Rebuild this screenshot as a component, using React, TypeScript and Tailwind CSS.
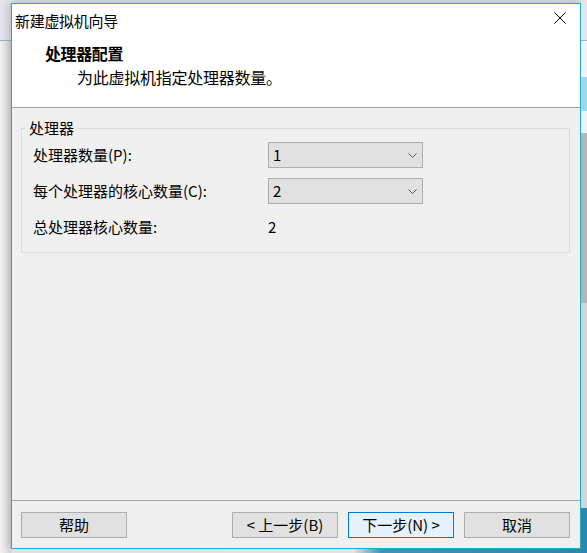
import React from "react";

const font = "font-['Noto_Sans_CJK_SC','Noto_Sans',sans-serif]";

const Chevron = () => (
  <svg width="9" height="5" viewBox="0 0 9 5" className="shrink-0">
    <polyline points="0.5,0.5 4.5,4.5 8.5,0.5" fill="none" stroke="#5a5a5a" strokeWidth="1" />
  </svg>
);

const Select = ({ value }: { value: string }) => (
  <div className="flex items-center justify-between w-[155px] h-[26px] pl-[4px] pr-[5px] bg-[#e1e1e1] border border-[#adadad]">
    <span className="text-[15px] leading-[20px]">{value}</span>
    <Chevron />
  </div>
);

const Button = ({ label, primary }: { label: string; primary?: boolean }) => (
  <button
    className={
      primary
        ? "w-[106px] h-[26px] flex items-center justify-center border border-[#0078d7] bg-[#e5f1fb] text-[15px] leading-[20px]"
        : "w-[106px] h-[26px] flex items-center justify-center border border-[#adadad] bg-[#e1e1e1] text-[15px] leading-[20px]"
    }
  >
    {label}
  </button>
);

const App = () => {
  return (
    <div className={`flex w-[587px] h-[553px] overflow-hidden text-black ${font}`}>
      {/* desktop backdrop, left */}
      <div className="flex flex-col w-[11px]">
        <div className="h-[40px] bg-[#e5e5ed]" />
        <div className="h-[1px] bg-[#9fb4c8]" />
        <div className="flex-1 bg-[linear-gradient(to_right,#f2f2f2,#dcdcdc)]" />
      </div>

      <div className="flex flex-col w-[570px]">
        <div className="h-[3px] bg-[#e5e5ed]" />
        {/* dialog window */}
        <div className="flex flex-col h-[546px] border border-[#18b0c8] bg-[#f0f0f0] shadow-[0_0_10px_rgba(0,0,0,0.3)]">
          <div className="h-[104px] bg-white border-b border-[#a0a0a0] flex flex-col">
            <div className="flex justify-between h-[34px]">
              <span className="pl-[3px] self-center text-[15px] leading-[20px] tracking-[-0.3px]">新建虚拟机向导</span>
              <svg width="12" height="12" viewBox="0 0 12 12" className="mt-[8px] mr-[14px]">
                <path d="M0.5 0.5 L11.5 11.5 M11.5 0.5 L0.5 11.5" stroke="#000" strokeWidth="1" />
              </svg>
            </div>
            <div className="pl-[33px] pt-[5px] text-[16px] leading-[20px] font-bold tracking-[-0.4px]">处理器配置</div>
            <div className="pl-[65px] mt-[4px] text-[16px] leading-[20px] tracking-[-0.25px]">为此虚拟机指定处理器数量。</div>
          </div>

          <div className="flex-1 pl-[9px] pr-[10px]">
            <fieldset className="mt-[10px] border border-[#dcdcdc] pl-[11px] pb-[12px]">
              <legend className="ml-[-8px] px-[4px] text-[15px] leading-[20px]">处理器</legend>
              <div className="flex flex-col gap-[10px] pt-[4px]">
                <div className="flex items-center h-[26px]">
                  <span className="w-[235px] text-[15px] leading-[20px]">处理器数量(P):</span>
                  <Select value="1" />
                </div>
                <div className="flex items-center h-[26px]">
                  <span className="w-[235px] text-[15px] leading-[20px]">每个处理器的核心数量(C):</span>
                  <Select value="2" />
                </div>
                <div className="flex items-center h-[26px]">
                  <span className="w-[235px] text-[15px] leading-[20px]">总处理器核心数量:</span>
                  <span className="text-[15px] leading-[20px]">2</span>
                </div>
              </div>
            </fieldset>
          </div>

          <div className="h-[48px] border-t border-[#a0a0a0] flex pt-[11px] pl-[9px] pr-[10px]">
            <Button label="帮助" />
            <div className="flex-1" />
            <div className="flex gap-[10px]">
              <Button label="< 上一步(B)" />
              <Button label="下一步(N) >" primary />
              <Button label="取消" />
            </div>
          </div>
        </div>
        <div className="flex-1 bg-[linear-gradient(to_right,#e0e0e0_0%,#e4e4e4_60%,#3a95b8_65%,#2f86ab_100%)]" />
      </div>

      {/* desktop backdrop, right */}
      <div className="flex flex-col flex-1">
        <div className="h-[40px] bg-[#e5e5ed]" />
        <div className="h-[1px] bg-[#9fb4c8]" />
        <div className="h-[36px] bg-[#f4f4f4]" />
        <div className="h-[34px] bg-[#a3d6ec]" />
        <div className="h-[22px] bg-[#eef2f5]" />
        <div className="h-[170px] bg-[#b5b5b5]" />
        <div className="flex-1 bg-[#d4d4d4]" />
        <div className="h-[45px] bg-[#2f86ab]" />
      </div>
    </div>
  );
};

export default App;
